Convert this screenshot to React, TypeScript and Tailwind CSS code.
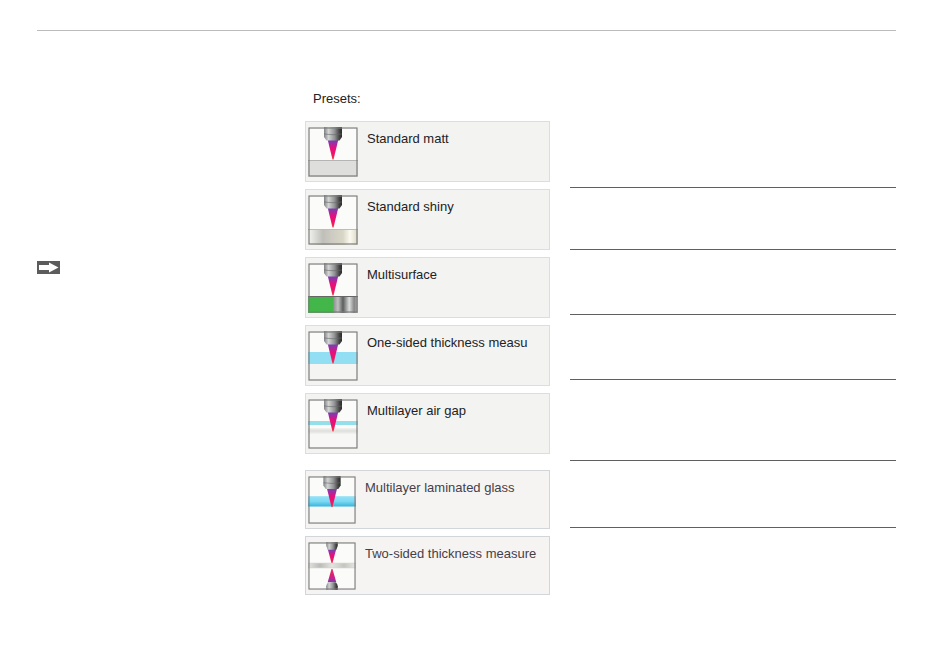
import React from 'react';

type PresetKind = 'matt' | 'shiny' | 'multi' | 'thickness' | 'airGap' | 'laminated' | 'twoSided';

interface Preset {
  kind: PresetKind;
  label: string;
}

const presets: Preset[] = [
  { kind: 'matt', label: 'Standard matt' },
  { kind: 'shiny', label: 'Standard shiny' },
  { kind: 'multi', label: 'Multisurface' },
  { kind: 'thickness', label: 'One-sided thickness measu' },
  { kind: 'airGap', label: 'Multilayer air gap' },
];

const extraPresets: Preset[] = [
  { kind: 'laminated', label: 'Multilayer laminated glass' },
  { kind: 'twoSided', label: 'Two-sided thickness measure' },
];

const Gradients = () => (
  <svg className="absolute h-0 w-0" aria-hidden="true">
    <defs>
      <linearGradient id="nozzle">
        <stop offset="0" stopColor="#808284" />
        <stop offset="0.25" stopColor="#d2d4d4" />
        <stop offset="0.6" stopColor="#8d8f90" />
        <stop offset="0.85" stopColor="#444" />
        <stop offset="1" stopColor="#2a2a2a" />
      </linearGradient>
      <linearGradient id="beam" x1="0" y1="0" x2="0" y2="1">
        <stop offset="0" stopColor="#6a45ad" />
        <stop offset="0.22" stopColor="#9c2fa4" />
        <stop offset="0.42" stopColor="#e4107e" />
        <stop offset="0.75" stopColor="#ee1466" />
        <stop offset="1" stopColor="#ee3a3c" />
      </linearGradient>
      <linearGradient id="beamUp" x1="0" y1="1" x2="0" y2="0">
        <stop offset="0" stopColor="#6a45ad" />
        <stop offset="0.3" stopColor="#c91f90" />
        <stop offset="1" stopColor="#ee2a4c" />
      </linearGradient>
      <linearGradient id="shiny">
        <stop offset="0" stopColor="#f4f4f2" />
        <stop offset="0.3" stopColor="#bfbfb9" />
        <stop offset="0.5" stopColor="#cfcdc3" />
        <stop offset="0.7" stopColor="#d8d6c5" />
        <stop offset="0.84" stopColor="#fbfaf1" />
        <stop offset="1" stopColor="#d9d7c0" />
      </linearGradient>
      <linearGradient id="metal">
        <stop offset="0" stopColor="#888" />
        <stop offset="0.2" stopColor="#bfc1c1" />
        <stop offset="0.4" stopColor="#5d5d5d" />
        <stop offset="0.65" stopColor="#dcdede" />
        <stop offset="0.85" stopColor="#858585" />
        <stop offset="1" stopColor="#bbb" />
      </linearGradient>
      <linearGradient id="glass" x1="0" y1="0" x2="0" y2="1">
        <stop offset="0" stopColor="#98e2f6" />
        <stop offset="0.5" stopColor="#7bd8f2" />
        <stop offset="1" stopColor="#30b2dc" />
      </linearGradient>
      <linearGradient id="layer" x1="0" y1="0" x2="0" y2="1">
        <stop offset="0" stopColor="#f3f3f1" />
        <stop offset="0.5" stopColor="#dededb" />
        <stop offset="1" stopColor="#f3f3f1" />
      </linearGradient>
      <linearGradient id="sheet">
        <stop offset="0" stopColor="#e4e4e1" />
        <stop offset="0.25" stopColor="#bbbbb7" />
        <stop offset="0.5" stopColor="#e3e3df" />
        <stop offset="0.75" stopColor="#c5c5c0" />
        <stop offset="1" stopColor="#e9e9e4" />
      </linearGradient>
    </defs>
  </svg>
);

const Surface: React.FC<{ kind: PresetKind }> = ({ kind }) => {
  switch (kind) {
    case 'matt':
      return (
        <>
          <rect y="33" width="50" height="17" fill="#dededd" />
          <path d="M0 33.5H50" stroke="#b4b4b4" />
        </>
      );
    case 'shiny':
      return (
        <>
          <rect y="34" width="50" height="16" fill="url(#shiny)" />
          <path d="M0 34.5H50" stroke="#bcbcb8" />
        </>
      );
    case 'multi':
      return (
        <>
          <rect y="33" width="25" height="17" fill="#43b649" />
          <rect x="25" y="33" width="25" height="17" fill="url(#metal)" />
          <path d="M0 33.5H50" stroke="#666" />
        </>
      );
    case 'thickness':
      return (
        <>
          <rect y="21" width="50" height="12" fill="#92dff3" />
          <rect y="33" width="50" height="17" fill="#f4f4f2" />
        </>
      );
    case 'airGap':
      return (
        <>
          <rect y="22" width="50" height="4" fill="#94dfe9" />
          <rect y="29" width="50" height="6" fill="url(#layer)" />
          <rect y="35" width="50" height="15" fill="#f7f7f6" />
        </>
      );
    case 'laminated':
      return (
        <>
          <rect y="21" width="50" height="11" fill="url(#glass)" />
          <rect y="32" width="50" height="18" fill="#f7f7f6" />
        </>
      );
    case 'twoSided':
      return (
        <>
          <rect y="22" width="50" height="5" fill="url(#sheet)" />
          <path d="M0 22H50M0 27H50" stroke="#cfcfcb" strokeWidth="0.6" />
        </>
      );
  }
};

const PresetIcon: React.FC<{ kind: PresetKind; size: string }> = ({ kind, size }) => (
  <svg viewBox="0 0 50 50" className={`shrink-0 ${size}`} aria-hidden="true">
    <rect width="50" height="50" fill="#fbfbfa" />
    <Surface kind={kind} />
    {kind === 'twoSided' ? (
      <>
        <path d="M20.5 7H29.5L25.5 22H24.5Z" fill="url(#beam)" />
        <path d="M19 0H31V4L29.5 8H20.5L19 4Z" fill="url(#nozzle)" />
        <path d="M20.5 42H29.5L25.5 28H24.5Z" fill="url(#beamUp)" />
        <path d="M19 50V46Q20 42 22 42H28Q30 42 31 46V50Z" fill="url(#nozzle)" />
      </>
    ) : (
      <>
        <path d="M19.5 12H30.5L25.5 32.5H24.5Z" fill="url(#beam)" />
        <path d="M16 0H34V10L31.5 13.5H18.5L16 10Z" fill="url(#nozzle)" />
        <path d="M16 7Q25 8.5 34 7" fill="none" stroke="#666" strokeWidth="0.6" />
      </>
    )}
    <rect x="1" y="1" width="48" height="48" fill="none" stroke="#7c7c7c" strokeWidth="1.2" />
  </svg>
);

// distance from one rule to the next in the right column
const ruleRows = ['h-[67px]', 'h-[62px]', 'h-[65px]', 'h-[65px]', 'h-[81px]', 'h-[67px]'];

export default function App() {
  return (
    <div className="bg-white pt-[30px] pr-[54px] pb-16 pl-[37px] font-['Liberation_Sans',Arial,sans-serif] text-[#222]">
      <Gradients />
      <header className="border-t border-[#bbb]" />

      <main className="grid grid-cols-[248px_245px_1fr] gap-x-5 pt-[60px]">
        <aside className="pt-[170px]">
          <svg viewBox="0 0 23 13" className="h-[13px] w-[23px]" role="img" aria-label="Note">
            <rect width="23" height="13" fill="#5c5c5c" />
            <path d="M2 4H12V1.5L21.5 6.5L12 11.5V9H2Z" fill="#fff" />
          </svg>
        </aside>

        <section>
          <h1 className="pl-2 text-[13px] leading-4">Presets:</h1>
          <ul className="mt-[14px] flex flex-col gap-[7px]">
            {presets.map(preset => (
              <li
                key={preset.kind}
                className="flex h-[61px] gap-[9px] border border-[#dcdddd] bg-[#f3f3f2] pt-[5px] pl-[2px]"
              >
                <PresetIcon kind={preset.kind} size="size-[50px]" />
                <span className="pt-1 text-[13px] leading-4 whitespace-nowrap">{preset.label}</span>
              </li>
            ))}
          </ul>
          <ul className="mt-4 flex flex-col gap-[7px]">
            {extraPresets.map(preset => (
              <li
                key={preset.kind}
                className="flex h-[59px] gap-[9px] border border-[#d3d6d9] bg-[#f5f4f3] pt-[5px] pl-[2px]"
              >
                <PresetIcon kind={preset.kind} size="size-[48px]" />
                <span className="pt-1 text-[13px] leading-4 whitespace-nowrap text-[#453f48]">{preset.label}</span>
              </li>
            ))}
          </ul>
        </section>

        <div className="pt-[30px]">
          {ruleRows.map((height, i) => (
            <div key={i} className={`border-b border-[#606060] ${height}`} />
          ))}
        </div>
      </main>
    </div>
  );
}
